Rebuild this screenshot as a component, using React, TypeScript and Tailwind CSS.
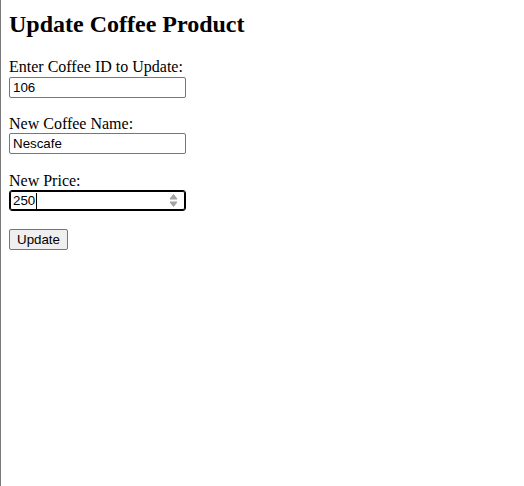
import { useState } from "react";

const serif = "font-['Liberation_Serif','Times_New_Roman',serif]";
const sans = "font-['Liberation_Sans',Arial,sans-serif]";

function Spinner() {
    return (
        <svg width="9" height="15" viewBox="0 0 9 15" className="shrink-0">
            <path d="M4.5 1.5 L8 6 L1 6 Z" fill="#a3a3a3" stroke="#a3a3a3" strokeWidth="1" strokeLinejoin="round" />
            <path d="M4.5 13.5 L8 9 L1 9 Z" fill="#a3a3a3" stroke="#a3a3a3" strokeWidth="1" strokeLinejoin="round" />
        </svg>
    );
}

export default function App() {
    const [coffeeId, setCoffeeId] = useState("106");
    const [name, setName] = useState("Nescafe");
    const [price] = useState("250");

    return (
        <div className="min-h-[486px] border-l border-[#7a7a7a] bg-white text-black">
            <div className="pl-2 pt-[11px]">
                <h2 className={`${serif} text-[24px] font-bold leading-[27px]`}>Update Coffee Product</h2>

                <form className="mt-[20px] flex flex-col items-start" onSubmit={(e) => e.preventDefault()}>
                    <label className={`${serif} text-[16px] leading-[18px]`}>Enter Coffee ID to Update:</label>
                    <input
                        value={coffeeId}
                        onChange={(e) => setCoffeeId(e.target.value)}
                        className={`${sans} mt-[1px] h-[21px] w-[177px] rounded-[2px] border border-[#767676] px-[3px] text-[13.33px] outline-none`}
                    />

                    <label className={`${serif} mt-[17px] text-[16px] leading-[18px]`}>New Coffee Name:</label>
                    <input
                        value={name}
                        onChange={(e) => setName(e.target.value)}
                        className={`${sans} h-[21px] w-[177px] rounded-[2px] border border-[#767676] px-[3px] text-[13.33px] outline-none`}
                    />

                    <label className={`${serif} mt-[18px] text-[16px] leading-[18px]`}>New Price:</label>
                    <div className="flex h-[21px] w-[177px] items-center rounded-[3px] border border-black pl-[3px] pr-[7px] shadow-[inset_0_0_0_1px_#000]">
                        <span className={`${sans} text-[13.33px] leading-[15px]`}>{price}</span>
                        <span className="ml-[1px] h-[16px] w-px bg-black" />
                        <span className="flex-1" />
                        <Spinner />
                    </div>

                    <button
                        type="submit"
                        className={`${sans} mt-[18px] h-[21px] w-[59px] rounded-[2px] border border-[#767676] bg-[#efefef] text-[13.33px] leading-[15px]`}
                    >
                        Update
                    </button>
                </form>
            </div>
        </div>
    );
}
